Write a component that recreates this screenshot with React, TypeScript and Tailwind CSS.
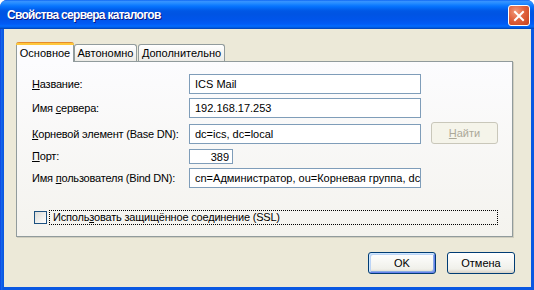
import React from "react";

const rowLabel = "w-[157px] shrink-0 text-[11px] tracking-[-0.2px] text-black leading-none";
const field =
  "h-[20px] w-[232px] border border-[#7f9db9] bg-white pl-[5px] text-[11px] text-black leading-none outline-none font-['Liberation_Sans',Arial,sans-serif]";

export default function App() {
  return (
    <div className="w-[534px] h-[290px] flex flex-col bg-[#0a3fcf] rounded-t-[7px] overflow-hidden font-['Liberation_Sans',Arial,sans-serif]">
      {/* Title bar */}
      <div className="h-[29px] shrink-0 flex items-start pl-[7px] pr-[4px] bg-[linear-gradient(to_bottom,#0058ee_0px,#3a93ff_1px,#288eff_3px,#127dff_5px,#036ffc_7px,#0262ee_9px,#0057e5_11px,#0054e3_14px,#0055eb_20px,#005bf5_24px,#026afe_26px,#0062ef_27px,#0052d6_28px,#0040ab_29px)]">
        <span className="mt-[9px] text-white font-bold text-[12px] tracking-[-0.7px] leading-none [text-shadow:1px_1px_0_#0a1882]">
          Свойства сервера каталогов
        </span>
        <button
          aria-label="Закрыть"
          className="ml-auto mt-[5px] w-[22px] h-[21px] rounded-[3px] border border-white flex items-center justify-center bg-[radial-gradient(circle_at_35%_30%,#f29a7c_0%,#e0623e_45%,#c8411b_100%)]"
        >
          <svg width="12" height="12" viewBox="0 0 12 12">
            <path
              d="M2 2 L10 10 M10 2 L2 10"
              stroke="white"
              strokeWidth="2"
              strokeLinecap="square"
            />
          </svg>
        </button>
      </div>

      {/* Window frame */}
      <div className="flex-1 flex pl-[4px] pr-[3px] pb-[3px] bg-[linear-gradient(to_right,#0831d9_0px,#166aee_1px,#0a58e2_3px)]">
        <div className="flex-1 bg-[#ece9d8] flex flex-col pl-[12px] pt-[13px]">
          {/* Tabs */}
          <div className="flex items-end h-[19px]">
            <div className="relative z-10 -mb-px w-[58px] h-[20px] rounded-t-[3px] border-x border-[#919b9c] bg-[#fcfcfe] flex flex-col">
              <div className="h-[3px] rounded-t-[3px] bg-[linear-gradient(to_bottom,#e68b2c_0px,#e68b2c_1px,#ffc73c_1px)] -mx-px" />
              <div className="flex-1 flex items-center justify-center text-[11px] text-black leading-none pb-[1px]">
                Основное
              </div>
            </div>
            <div className="w-[63px] h-[17px] rounded-t-[3px] border-t border-x border-[#919b9c] bg-[linear-gradient(to_bottom,#ffffff,#ecebe6)] flex items-center justify-center text-[11px] text-black leading-none">
              Автономно
            </div>
            <div className="ml-px w-[87px] h-[17px] rounded-t-[3px] border-t border-x border-[#919b9c] bg-[linear-gradient(to_bottom,#ffffff,#ecebe6)] flex items-center justify-center text-[11px] text-black leading-none">
              Дополнительно
            </div>
          </div>

          {/* Tab page */}
          <div className="w-[497px] h-[176px] border border-[#919b9c] shadow-[1px_1px_0_#d0cebf] bg-[linear-gradient(to_bottom,#fcfcfe,#f4f3ee)] pt-[12px] pl-[15px] flex flex-col">
            <div className="flex items-center h-[20px]">
              <span className={rowLabel}>
                <u>Н</u>азвание:
              </span>
              <input readOnly value="ICS Mail" className={field} />
            </div>
            <div className="flex items-center h-[20px] mt-[4px]">
              <span className={rowLabel}>
                Имя <u>с</u>ервера:
              </span>
              <input readOnly value="192.168.17.253" className={field} />
            </div>
            <div className="flex items-start h-[22px] mt-[4px]">
              <span className={`${rowLabel} mt-[7px]`}>
                <u>К</u>орневой элемент (Base DN):
              </span>
              <input readOnly value="dc=ics, dc=local" className={`${field} mt-[2px]`} />
              <button
                disabled
                className="ml-[10px] w-[67px] h-[22px] rounded-[3px] border border-[#c9c7ba] bg-[#f5f4ea] text-[11px] text-[#aca899] leading-none"
              >
                <u>Н</u>айти
              </button>
            </div>
            <div className="flex items-center h-[15px] mt-[5px]">
              <span className={rowLabel}>
                <u>П</u>орт:
              </span>
              <input
                readOnly
                value="389"
                className="h-[15px] w-[44px] border border-[#7f9db9] bg-white pr-[3px] text-right text-[11px] text-black leading-none outline-none font-['Liberation_Sans',Arial,sans-serif]"
              />
            </div>
            <div className="flex items-center h-[20px] mt-[4px]">
              <span className={rowLabel}>
                Имя <u>п</u>ользователя (Bind DN):
              </span>
              <input
                readOnly
                value="cn=Администратор, ou=Корневая группа, dc=ics, dc=local"
                className={field}
              />
            </div>

            <div className="flex items-center h-[15px] mt-[22px]">
              <span className="ml-[2px] w-[13px] h-[13px] border border-[#1c5180] bg-[linear-gradient(135deg,#dcdcd7,#ffffff)]" />
              <span className="ml-[2px] w-[449px] h-[15px] border border-dotted border-black flex items-center pl-[3px] text-[11px] tracking-[-0.2px] text-black leading-none">
                Исполь<u>з</u>овать защищённое соединение (SSL)
              </span>
            </div>
          </div>

          {/* Dialog buttons */}
          <div className="flex justify-end gap-[11px] mt-[15px] mr-[16px]">
            <button className="w-[68px] h-[22px] rounded-[3px] border border-[#003c74] bg-[linear-gradient(to_bottom,#ffffff,#f0f0ea_80%,#d6d0c5)] shadow-[inset_1px_1px_0_#cee7ff,inset_-1px_-1px_0_#6982ee,inset_2px_2px_0_#bcd4f6,inset_-2px_-2px_0_#89ade4] text-[11px] text-black leading-none">
              OK
            </button>
            <button className="w-[68px] h-[22px] rounded-[3px] border border-[#003c74] bg-[linear-gradient(to_bottom,#ffffff,#f0f0ea_80%,#d6d0c5)] text-[11px] text-black leading-none">
              Отмена
            </button>
          </div>
        </div>
      </div>
    </div>
  );
}
